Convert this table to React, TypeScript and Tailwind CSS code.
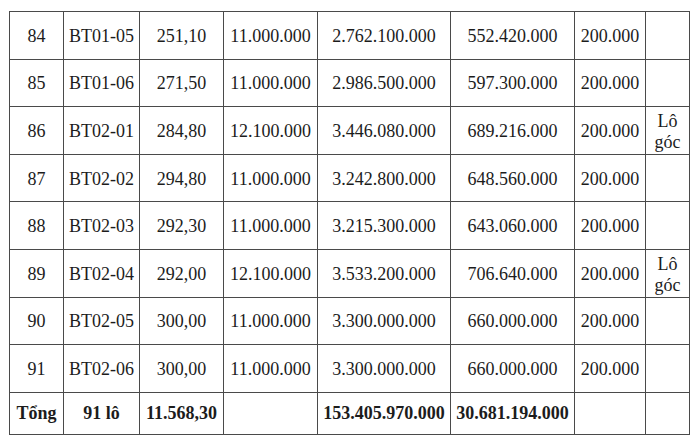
const rows = [
  ["84", "BT01-05", "251,10", "11.000.000", "2.762.100.000", "552.420.000", "200.000", ""],
  ["85", "BT01-06", "271,50", "11.000.000", "2.986.500.000", "597.300.000", "200.000", ""],
  ["86", "BT02-01", "284,80", "12.100.000", "3.446.080.000", "689.216.000", "200.000", "Lô góc"],
  ["87", "BT02-02", "294,80", "11.000.000", "3.242.800.000", "648.560.000", "200.000", ""],
  ["88", "BT02-03", "292,30", "11.000.000", "3.215.300.000", "643.060.000", "200.000", ""],
  ["89", "BT02-04", "292,00", "12.100.000", "3.533.200.000", "706.640.000", "200.000", "Lô góc"],
  ["90", "BT02-05", "300,00", "11.000.000", "3.300.000.000", "660.000.000", "200.000", ""],
  ["91", "BT02-06", "300,00", "11.000.000", "3.300.000.000", "660.000.000", "200.000", ""],
];

const widths = [54, 76, 84, 94, 133, 124, 71, 44];

export default function App() {
  return (
    <div className="w-[700px] h-[439px] bg-white pl-[9px] pt-[11px] overflow-hidden">
      <table
        className="table-fixed border-collapse text-[18px] text-[#1c1c1c] w-[680px]"
        style={{ fontFamily: '"Liberation Serif", "Times New Roman", serif' }}
      >
        <colgroup>
          {widths.map((w, i) => (
            <col key={i} style={{ width: w }} />
          ))}
        </colgroup>
        <tbody>
          {rows.map((r) => (
            <tr key={r[0]} className="h-[47.6px]">
              {r.map((c, i) => (
                <td
                  key={i}
                  className={`border border-[#4a4a4a] p-0 text-center align-middle ${
                    i === 7 ? "leading-[21px] pt-[4px]" : "leading-none pt-[1px]"
                  }`}
                >
                  {c === "Lô góc" ? (
                    <>
                      Lô
                      <br />
                      góc
                    </>
                  ) : (
                    c
                  )}
                </td>
              ))}
            </tr>
          ))}
          <tr className="h-[42px] font-bold">
            <td className="border border-[#4a4a4a] p-0 text-center">Tổng</td>
            <td className="border border-[#4a4a4a] p-0 text-center">91 lô</td>
            <td className="border border-[#4a4a4a] p-0 text-center">11.568,30</td>
            <td className="border border-[#4a4a4a] p-0 text-center"></td>
            <td className="border border-[#4a4a4a] p-0 text-center">153.405.970.000</td>
            <td className="border border-[#4a4a4a] p-0 text-center">30.681.194.000</td>
            <td className="border border-[#4a4a4a] p-0 text-center"></td>
            <td className="border border-[#4a4a4a] p-0 text-center"></td>
          </tr>
        </tbody>
      </table>
    </div>
  );
}
